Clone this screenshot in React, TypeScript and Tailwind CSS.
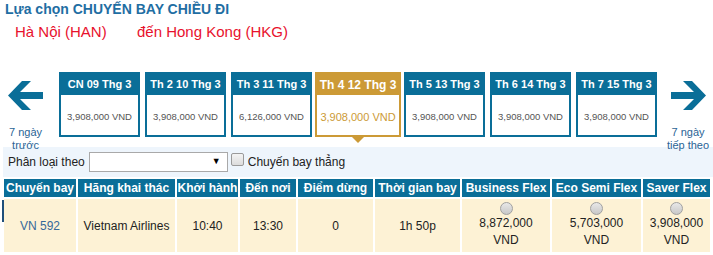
const dates = [
  { label: "CN 09 Thg 3", price: "3,908,000 VND" },
  { label: "Th 2 10 Thg 3", price: "3,908,000 VND" },
  { label: "Th 3 11 Thg 3", price: "6,126,000 VND" },
  { label: "Th 4 12 Thg 3", price: "3,908,000 VND", selected: true },
  { label: "Th 5 13 Thg 3", price: "3,908,000 VND" },
  { label: "Th 6 14 Thg 3", price: "3,908,000 VND" },
  { label: "Th 7 15 Thg 3", price: "3,908,000 VND" },
];

const headers = [
  "Chuyến bay",
  "Hãng khai thác",
  "Khởi hành",
  "Đến nơi",
  "Điểm dừng",
  "Thời gian bay",
  "Business Flex",
  "Eco Semi Flex",
  "Saver Flex",
];

const fares = ["8,872,000", "5,703,000", "3,908,000"];

const Arrow = ({ flip }: { flip?: boolean }) => (
  <svg
    width="35"
    height="31"
    viewBox="0 0 35 31"
    className={flip ? "-scale-x-100" : ""}
  >
    <polygon
      points="0,15.5 14,1 23,1 12,12 35,12 35,19 12,19 23,30 14,30"
      fill="#0a6e98"
    />
  </svg>
);

const DateCard = ({
  label,
  price,
  selected,
}: {
  label: string;
  price: string;
  selected?: boolean;
}) => {
  if (selected) {
    return (
      <div className="relative -mx-[2px] flex h-[65px] w-[86px] shrink-0 flex-col border-2 border-[#cc9a36] bg-white">
        <div className="flex h-[21px] items-center justify-center bg-[#cc9a36] text-[12px] font-bold text-white">
          {label}
        </div>
        <div className="flex flex-1 items-center justify-center pt-[4px] text-[11px] text-[#cc9a36]">
          {price}
        </div>
        <div className="absolute -bottom-[8px] left-1/2 h-0 w-0 -translate-x-1/2 border-x-[7px] border-t-[7px] border-x-transparent border-t-[#cc9a36]" />
      </div>
    );
  }
  return (
    <div className="flex h-[65px] w-[81px] shrink-0 flex-col border-2 border-[#0a6e98] bg-white">
      <div className="flex h-[21px] items-center justify-center bg-[#0a6e98] text-[11px] font-bold text-white">
        {label}
      </div>
      <div className="flex flex-1 items-center justify-center pt-[4px] text-[9.5px] text-[#555]">
        {price}
      </div>
    </div>
  );
};

const App = () => {
  return (
    <div className="w-[713px] bg-white font-['Liberation_Sans',Arial,sans-serif]">
      <div className="pl-[5px] text-[14px] font-bold leading-[18px] text-[#1f6ea3]">
        Lựa chọn CHUYẾN BAY CHIỀU ĐI
      </div>
      <div className="mt-[4px] flex h-[20px] items-center pl-[15px] text-[15px] text-[#e8112d]">
        <span className="w-[122px]">Hà Nội (HAN)</span>
        <span>đến Hong Kong (HKG)</span>
      </div>

      <div className="mt-[30px] flex h-[75px]">
        <div className="flex w-[59px] shrink-0 flex-col items-center pr-[8px]">
          <div className="mt-[8px]">
            <Arrow />
          </div>
          <div className="mt-[15px] text-center text-[11px] leading-[13px] text-[#2a6496]">
            7 ngày
            <br />
            trước
          </div>
        </div>
        <div className="flex gap-[5px]">
          {dates.map((d) => (
            <DateCard key={d.label} {...d} />
          ))}
        </div>
        <div className="flex w-[56px] shrink-0 flex-col items-center pl-[6px]">
          <div className="mt-[8px]">
            <Arrow flip />
          </div>
          <div className="mt-[15px] whitespace-nowrap text-center text-[11px] leading-[13px] text-[#2a6496]">
            7 ngày
            <br />
            tiếp theo
          </div>
        </div>
      </div>

      <div className="ml-[3px] flex h-[30px] items-center bg-[#eef5fc] pl-[5px] text-[12px] text-[#222]">
        <span>Phân loại theo</span>
        <div className="ml-[4px] flex h-[20px] w-[139px] items-center justify-end border border-[#a9a9a9] bg-white pr-[6px] text-[9px] text-black">
          ▼
        </div>
        <div className="ml-[3px] -mt-[6px] h-[13px] w-[13px] rounded-[2px] border border-[#9a9a9a] bg-gradient-to-b from-[#f4f4f4] to-[#dcdcdc]" />
        <span className="ml-[4px]">Chuyến bay thẳng</span>
      </div>

      <div className="relative mt-[2px] ml-[4px] grid grid-cols-[72px_97px_61px_56px_75px_85px_88px_89px_67px] gap-[2px]">
        {headers.map((h) => (
          <div
            key={h}
            className="flex h-[18px] items-center justify-center whitespace-nowrap bg-[#0a6e98] text-[12px] font-bold text-white"
          >
            {h}
          </div>
        ))}
        <div className="flex h-[53px] items-center justify-center bg-[#fdf2d5] text-[12px] text-[#35699a]">
          VN 592
        </div>
        <div className="flex items-center justify-center bg-[#fdf2d5] text-[12px] text-[#222]">
          Vietnam Airlines
        </div>
        <div className="flex items-center justify-center bg-[#fdf2d5] text-[12px] text-[#222]">
          10:40
        </div>
        <div className="flex items-center justify-center bg-[#fdf2d5] text-[12px] text-[#222]">
          13:30
        </div>
        <div className="flex items-center justify-center bg-[#fdf2d5] text-[12px] text-[#222]">
          0
        </div>
        <div className="flex items-center justify-center bg-[#fdf2d5] text-[12px] text-[#222]">
          1h 50p
        </div>
        {fares.map((f) => (
          <div
            key={f}
            className="flex flex-col items-center bg-[#fdf2d5] pt-[3px] text-[12px] leading-[17px] text-[#222]"
          >
            <div className="h-[13px] w-[13px] rounded-full border border-[#a0a0a0] bg-gradient-to-b from-[#e8e8e8] to-[#c8c8c8]" />
            <span>{f}</span>
            <span>VND</span>
          </div>
        ))}
        <div className="absolute -left-[2px] top-[21px] h-[22px] w-[2px] bg-[#1f4f7a]" />
      </div>
    </div>
  );
};

export default App;
